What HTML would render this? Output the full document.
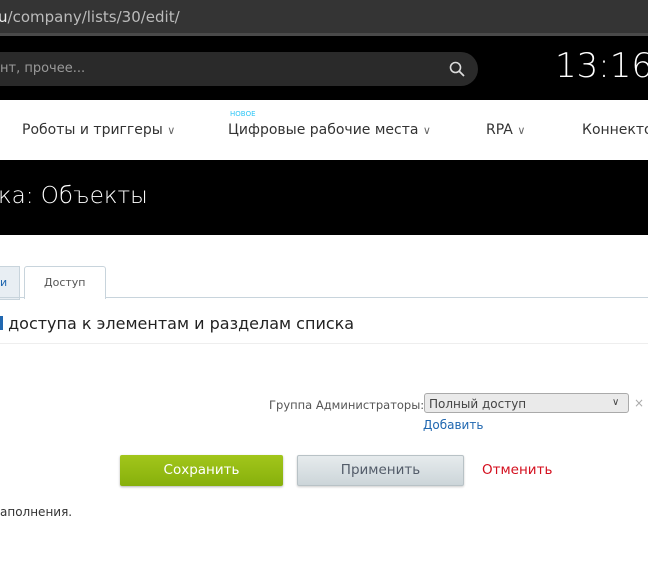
<!DOCTYPE html>
<html><head><meta charset="utf-8"><style>
body{margin:0;width:648px;height:578px;overflow:hidden;background:#fff;font-family:"DejaVu Sans","Liberation Sans",sans-serif;position:relative}
.a{position:absolute;white-space:nowrap}
</style></head><body>
<div class="a" style="left:0;top:0;width:648px;height:33px;background:#343434;border-bottom:3px solid #4a4a4a"></div>
<div class="a" style="left:-2px;top:8px;font-size:15px;color:#bbb"><span style="color:#eee">u</span>/company/lists/30/edit/</div>
<div class="a" style="left:0;top:36px;width:648px;height:64px;background:#000"></div>
<div class="a" style="left:-20px;top:52px;width:498px;height:34px;background:#2a2a2a;border-radius:17px"></div>
<div class="a" style="left:0;top:61px;font-size:13px;color:#999">нт, прочее...</div>
<svg class="a" style="left:448px;top:60px" width="18" height="18" viewBox="0 0 18 18"><circle cx="7.5" cy="7.5" r="5" fill="none" stroke="#ddd" stroke-width="1.6"/><path d="M11 11l5 5" stroke="#ddd" stroke-width="1.8"/></svg>
<div class="a" style="left:555px;top:46px;font-size:34px;color:#fff;font-weight:300">13:16</div>
<div class="a" style="left:22px;top:122px;font-size:14px;color:#333">Роботы и триггеры <span style="font-size:11px;color:#666">&#x2228;</span></div>
<div class="a" style="left:230px;top:110px;font-size:7px;color:#2fc6f6">НОВОЕ</div>
<div class="a" style="left:228px;top:122px;font-size:14px;color:#333">Цифровые рабочие места <span style="font-size:11px;color:#666">&#x2228;</span></div>
<div class="a" style="left:486px;top:122px;font-size:14px;color:#333">RPA <span style="font-size:11px;color:#666">&#x2228;</span></div>
<div class="a" style="left:582px;top:122px;font-size:14px;color:#333">Коннекто</div>
<div class="a" style="left:0;top:160px;width:648px;height:75px;background:#000"></div>
<div class="a" style="left:-2px;top:183px;font-size:23px;color:#fff;font-weight:300">ка: Объекты</div>
<div class="a" style="left:-10px;top:266px;width:28px;height:32px;background:#e8eef3;border:1px solid #c8d4dc"></div>
<div class="a" style="left:0;top:276px;font-size:11px;color:#2067b0">и</div>
<div class="a" style="left:0;top:297px;width:648px;height:1px;background:#c8d4dc"></div>
<div class="a" style="left:24px;top:266px;width:80px;height:32px;background:#fff;border:1px solid #c8d4dc;border-bottom:none;border-radius:3px 3px 0 0"></div>
<div class="a" style="left:44px;top:276px;font-size:11px;color:#555">Доступ</div>
<div class="a" style="left:0;top:314px;font-size:16px;color:#222"><span style="display:inline-block;width:3px;height:14px;background:#2067b0;vertical-align:-1px"></span> доступа к элементам и разделам списка</div>
<div class="a" style="left:0;top:343px;width:648px;height:1px;background:#eee"></div>
<div class="a" style="left:269px;top:398px;font-size:11.5px;color:#555">Группа Администраторы:</div>
<div class="a" style="left:424px;top:393px;width:205px;height:20px;background:#eaeaea;border:1px solid #aaa;border-radius:3px;box-sizing:border-box"></div>
<div class="a" style="left:429px;top:397px;font-size:12px;color:#444">Полный доступ</div>
<div class="a" style="left:612px;top:397px;font-size:10px;color:#444">&#x2228;</div>
<div class="a" style="left:634px;top:396px;font-size:12px;color:#aaa">×</div>
<div class="a" style="left:423px;top:418px;font-size:12px;color:#2067b0">Добавить</div>
<div class="a" style="left:120px;top:455px;width:163px;height:31px;background:linear-gradient(#a2c61b,#87b00c);border-radius:2px;box-shadow:0 1px 2px rgba(0,0,0,.3)"></div>
<div class="a" style="left:120px;top:462px;width:163px;text-align:center;font-size:13.5px;color:#fff">Сохранить</div>
<div class="a" style="left:297px;top:455px;width:167px;height:31px;background:linear-gradient(#e6ebed,#ccd5d9);border:1px solid #b8c2c6;border-radius:2px;box-sizing:border-box;box-shadow:0 1px 2px rgba(0,0,0,.2)"></div>
<div class="a" style="left:297px;top:462px;width:167px;text-align:center;font-size:13.5px;color:#535c69">Применить</div>
<div class="a" style="left:482px;top:462px;font-size:13.5px;color:#d40f1e">Отменить</div>
<div class="a" style="left:0;top:505px;font-size:12px;color:#333">аполнения.</div>
</body></html>
